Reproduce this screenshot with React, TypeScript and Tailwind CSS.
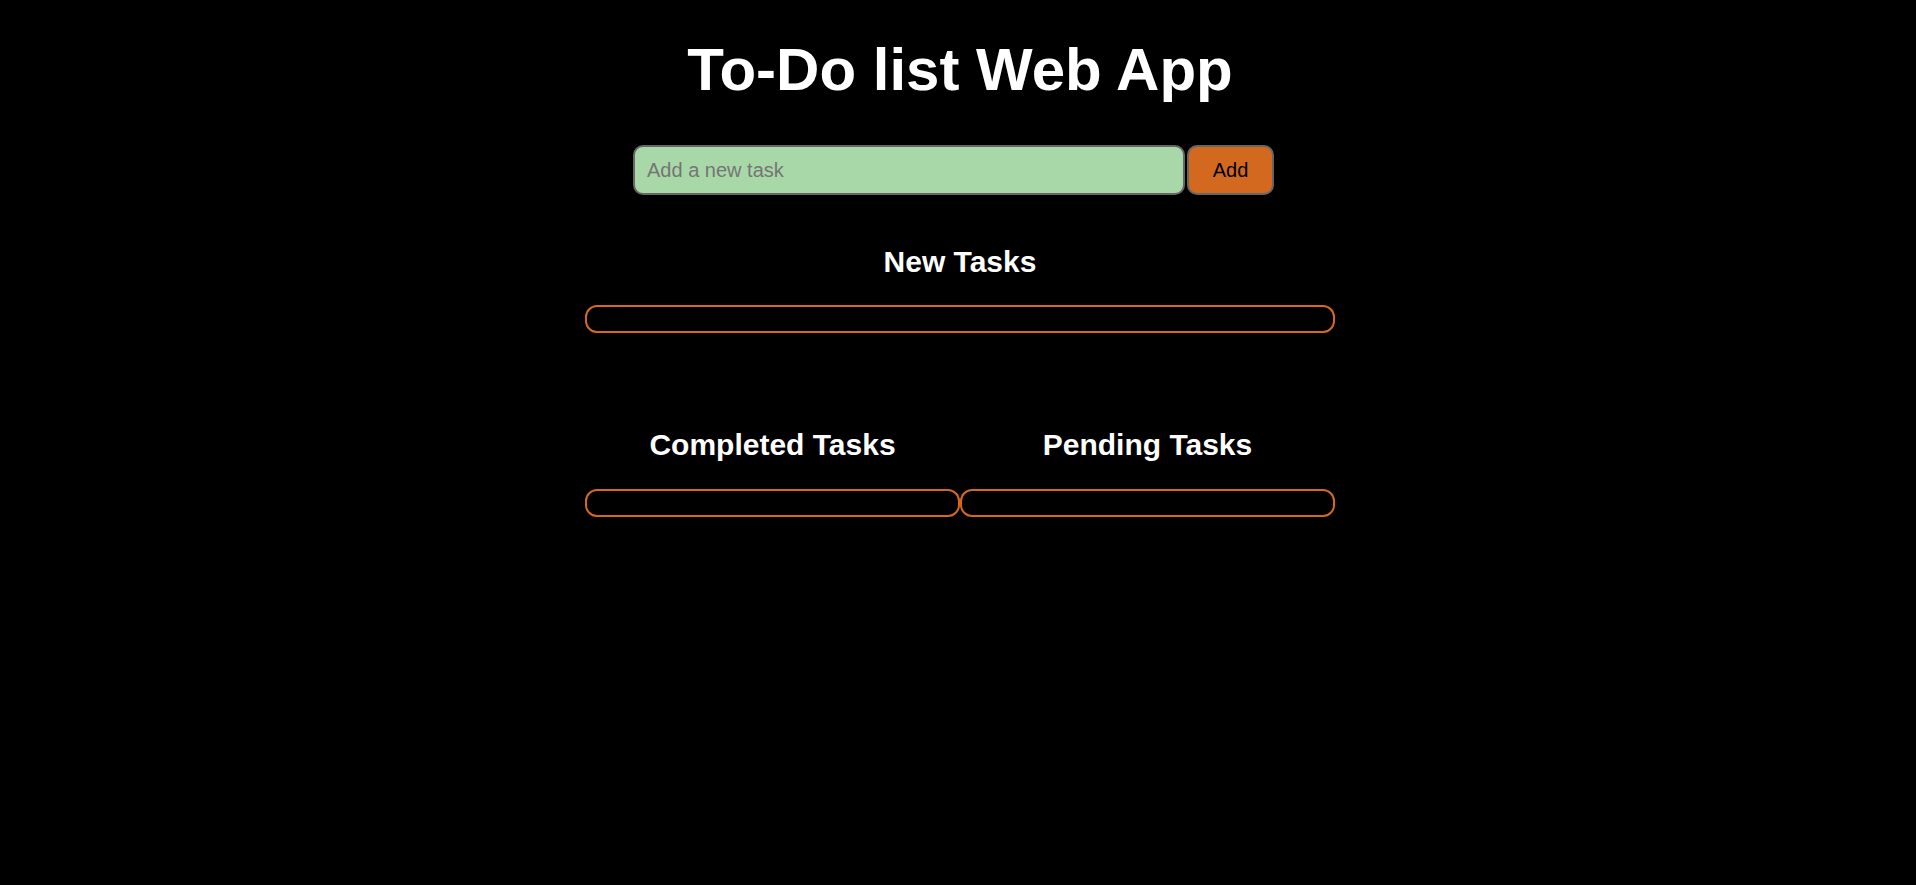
import { useState } from 'react';

function TaskColumn({ title }: { title: string }) {
  return (
    <div className="flex flex-col">
      <h2 className="text-center text-[30px] font-bold leading-none text-white">{title}</h2>
      <ul className="mt-[29px] h-[28px] rounded-[12px] border-2 border-[#d2691e]"></ul>
    </div>
  );
}

export default function App() {
  const [task, setTask] = useState('');

  return (
    <div className="min-h-screen bg-black font-['Liberation_Sans',Arial,sans-serif]">
      <div className="flex flex-col items-center pt-[40px]">
        <h1 className="ml-[4px] text-[60px] font-bold leading-none text-white">To-Do list Web App</h1>

        <div className="mt-[45px] mr-[9px] flex items-center gap-[2px]">
          <input
            className="h-[50px] w-[552px] rounded-[10px] border-2 border-[#666666] bg-[#a8d8a8] pl-[12px] text-[20px] text-black outline-none placeholder:text-[#757575]"
            type="text"
            placeholder="Add a new task"
            value={task}
            onChange={(e) => setTask(e.target.value)}
          />
          <button className="h-[50px] w-[87px] rounded-[10px] border-2 border-[#666666] bg-[#d2691e] text-[20px] text-black">
            Add
          </button>
        </div>

        <div className="mt-[52px] ml-[4px] w-[750px]">
          <h2 className="text-center text-[30px] font-bold leading-none text-white">New Tasks</h2>
          <ul className="mt-[28px] h-[28px] rounded-[12px] border-2 border-[#d2691e]"></ul>
        </div>

        <div className="mt-[97px] ml-[4px] grid w-[750px] grid-cols-2">
          <TaskColumn title="Completed Tasks" />
          <TaskColumn title="Pending Tasks" />
        </div>
      </div>
    </div>
  );
}
